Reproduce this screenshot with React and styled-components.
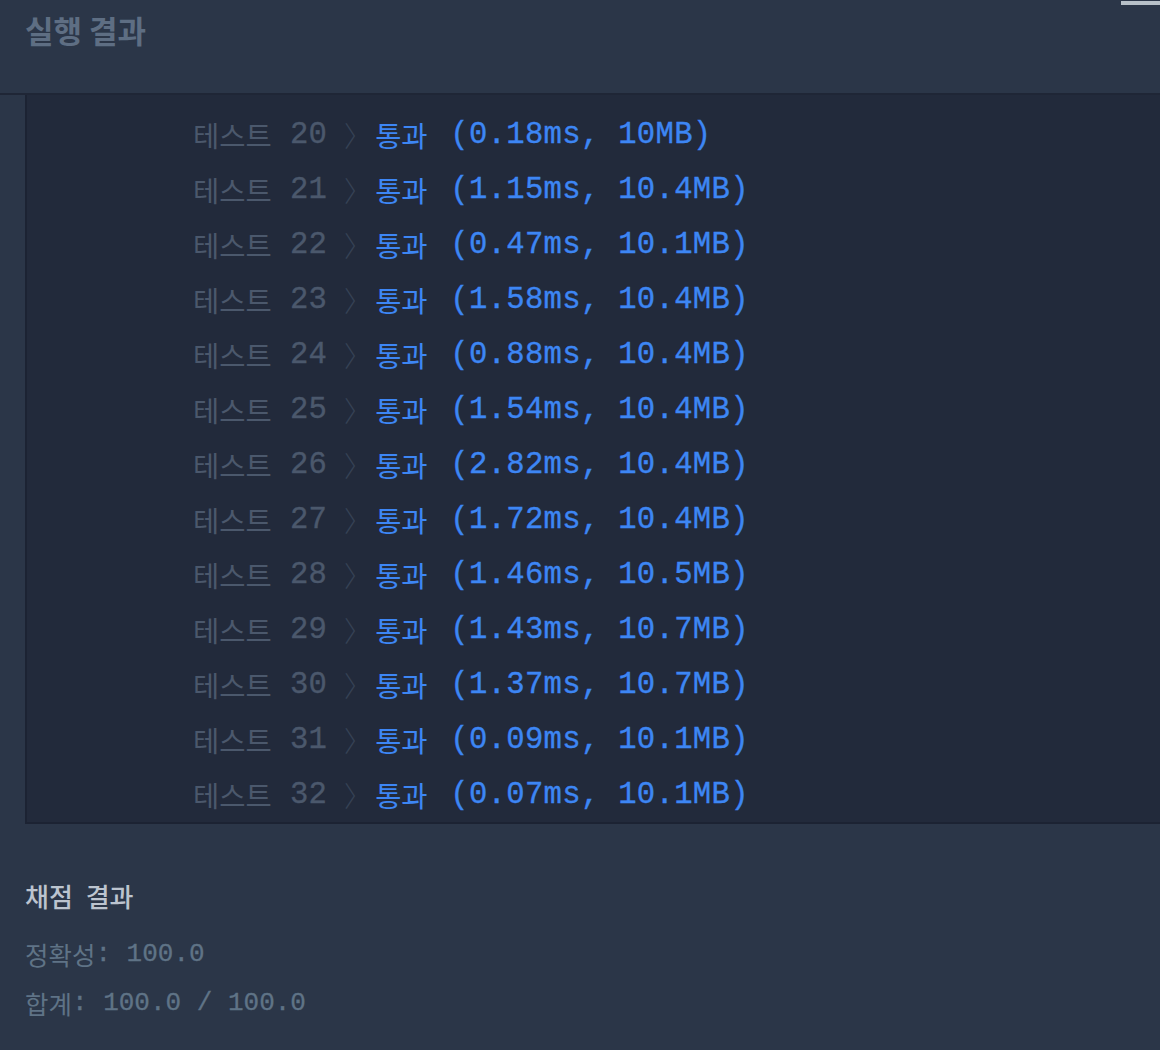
import styled, { createGlobalStyle } from "styled-components";

const GlobalStyle = createGlobalStyle`
  html, body {
    margin: 0;
    padding: 0;
    background: #2b3648;
  }
  body {
    font-family: "Noto Sans CJK KR", "Noto Sans", sans-serif;
  }
`;

const results = [
  ["20", "0.18ms", "10MB"],
  ["21", "1.15ms", "10.4MB"],
  ["22", "0.47ms", "10.1MB"],
  ["23", "1.58ms", "10.4MB"],
  ["24", "0.88ms", "10.4MB"],
  ["25", "1.54ms", "10.4MB"],
  ["26", "2.82ms", "10.4MB"],
  ["27", "1.72ms", "10.4MB"],
  ["28", "1.46ms", "10.5MB"],
  ["29", "1.43ms", "10.7MB"],
  ["30", "1.37ms", "10.7MB"],
  ["31", "0.09ms", "10.1MB"],
  ["32", "0.07ms", "10.1MB"],
];

const Page = styled.div`
  position: relative;
  width: 1160px;
  height: 1050px;
  overflow: hidden;
  background: #2b3648;
`;

const ScrollThumb = styled.div`
  position: absolute;
  top: 1px;
  right: 0;
  width: 39px;
  height: 4px;
  background: #b7c0c8;
`;

const Header = styled.div`
  height: 93px;
  border-bottom: 2px solid #1f2636;
  padding-left: 25px;
  h3 {
    margin: 0;
    padding-top: 10px;
    font-size: 31px;
    font-weight: 700;
    color: #5e6e83;
    line-height: 40px;
  }
`;

const Output = styled.div`
  margin-left: 25px;
  height: 727px;
  overflow: hidden;
  background: #222a3b;
  border-left: 2px solid #1c2333;
  border-bottom: 2px solid #1c2333;
`;

const List = styled.div`
  padding: 12.5px 0 0 166px;
`;

const Row = styled.div`
  display: flex;
  align-items: center;
  height: 55px;
  font-family: "Liberation Mono", "Noto Sans CJK KR", monospace;
  font-size: 30.6px;
  white-space: pre;
  -webkit-text-stroke: 0.35px currentColor;
`;

const Hangul = styled.span`
  font-family: "Noto Sans CJK KR", sans-serif;
  font-size: ${(p) => p.$size || 28.5}px;
  line-height: 1;
  color: ${(p) => p.$color};
  -webkit-text-stroke: 0;
`;

const Num = styled.span`
  color: #4b586c;
`;

const Chevron = styled.span`
  font-family: "Noto Sans CJK KR", sans-serif;
  font-size: 28px;
  font-weight: 300;
  color: #364255;
  margin-left: -1px;
  margin-right: 3px;
  -webkit-text-stroke: 0;
`;

const Pass = styled.span`
  color: #3d86f4;
  padding-left: 4px;
  letter-spacing: 0.3px;
`;

const Grade = styled.div`
  padding: 54px 0 0 25px;
  h4 {
    margin: 0 0 15px;
    font-size: 26px;
    font-weight: 500;
    color: #bcc4cf;
    word-spacing: 7px;
    line-height: 36px;
  }
`;

const ScoreLine = styled.div`
  display: flex;
  align-items: center;
  height: 49px;
  font-family: "Liberation Mono", "Noto Sans CJK KR", monospace;
  font-size: 26px;
  color: #5f7386;
  white-space: pre;
  -webkit-text-stroke: 0.3px currentColor;
`;

function ResultRow({ no, time, mem }) {
  return (
    <Row>
      <Hangul $color="#4b586c">테스트</Hangul>
      <Num> {no} </Num>
      <Chevron>〉</Chevron>
      <Hangul $color="#3d86f4">통과</Hangul>
      <Pass> ({time}, {mem})</Pass>
    </Row>
  );
}

export default function App() {
  return (
    <>
      <GlobalStyle />
      <Page>
        <ScrollThumb />
        <Header>
          <h3>실행 결과</h3>
        </Header>
        <Output>
          <List>
            {results.map(([no, time, mem]) => (
              <ResultRow key={no} no={no} time={time} mem={mem} />
            ))}
          </List>
        </Output>
        <Grade>
          <h4>채점 결과</h4>
          <ScoreLine>
            <Hangul $color="#5f7386" $size={25.5}>정확성</Hangul>: 100.0
          </ScoreLine>
          <ScoreLine>
            <Hangul $color="#5f7386" $size={25.5}>합계</Hangul>: 100.0 / 100.0
          </ScoreLine>
        </Grade>
      </Page>
    </>
  );
}
